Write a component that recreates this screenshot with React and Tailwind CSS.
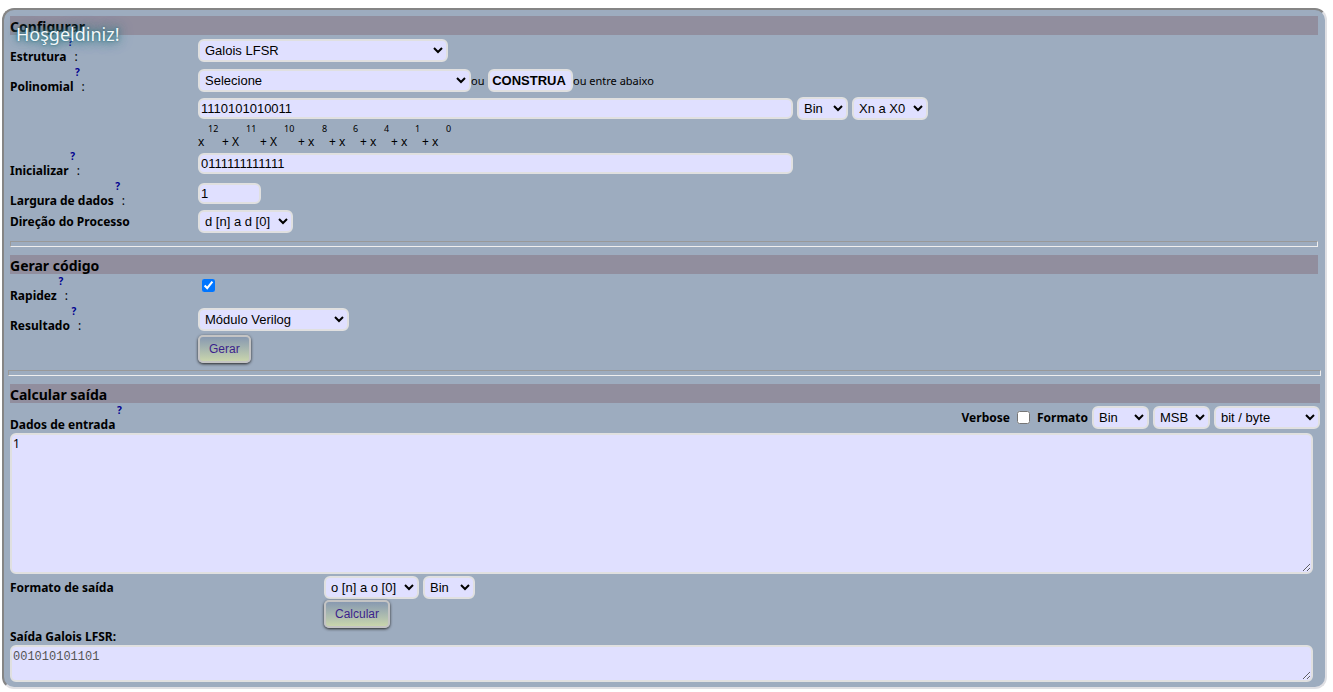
const field = "rounded-md border-2 border-[#e0e0e0] bg-[#e0e0ff]";
const sans = "font-['Liberation_Sans',Arial,sans-serif] text-[13px] font-normal text-black";

function Select({ label, id, value, className = "" }) {
  return (
    <select id={id} aria-label={label} className={`${field} ${sans} h-[23px] shrink-0 px-[1px] ${className}`}>
      <option>{value}</option>
    </select>
  );
}

function Band({ children }) {
  return <h2 className="h-[19px] bg-[#918e9e] text-[14px] leading-[21px] font-bold">{children}</h2>;
}

function Label({ htmlFor, children, colon = true }) {
  return (
    <div className="flex h-[30px] shrink-0">
      <label htmlFor={htmlFor} className="self-end text-[12px] leading-4 font-bold">{children}</label>
      <a href="#help" className="mt-[1px] h-3 w-2 text-center text-[10px] leading-3 font-bold text-[#000090]">?</a>
      {colon && <span className="self-end text-[12px] leading-4">:</span>}
    </div>
  );
}

function Row({ label, children }) {
  return (
    <div className="grid grid-cols-[188px_1fr]">
      <div>{label}</div>
      <div>{children}</div>
    </div>
  );
}

function Rule({ className = "" }) {
  return <hr className={`mt-[7px] mb-2 h-[6px] border border-t-[#999999] border-r-[#eeeeee] border-b-[#eeeeee] border-l-[#999999] ${className}`} />;
}

function ActionButton({ children }) {
  return (
    <button type="button" className="h-7 rounded-[5px] border-2 border-[#c4c4c4] bg-linear-to-b from-[#8899b0] to-[#c9d5ac] px-[9px] font-['Liberation_Sans',Arial,sans-serif] text-[12px] text-[#3c1f8c] shadow-[0_1px_3px_#222]">
      {children}
    </button>
  );
}

const terms = [
  ["x", 12], ["X", 11], ["X", 10], ["x", 8], ["x", 6], ["x", 4], ["x", 1], ["x", 0],
];

function Polynomial() {
  return (
    <div className="flex h-7 text-[12px]">
      {terms.map(([base, power], i) => (
        <span key={power} className="flex">
          <span className={`self-end leading-[14px] whitespace-pre ${i === 0 ? "w-[10px]" : "w-6"}`}>{i === 0 ? base : `+ ${base}`}</span>
          <sup className={`top-0 self-start text-[9px] leading-4 ${power > 9 ? "w-[14px]" : "w-[7px]"}`}>{power}</sup>
        </span>
      ))}
    </div>
  );
}

export default function App() {
  return (
    <div className="pt-2 pr-[6px] pb-[3px] pl-[2px] font-['Noto_Sans',Tahoma,sans-serif] text-[12px] text-black">
      <main className="relative rounded-xl border-2 border-t-[#858585] border-r-[#e0e0e4] border-b-[#e0e0e4] border-l-[#858585] bg-[#9dacbf] px-[6px] pt-[6px] pb-[5px]">
        <div className="absolute top-[10px] left-3 text-[18px] leading-7 text-[#f4f8fa] [text-shadow:0_0_2px_#2d6d7d,0_0_5px_#4b8793,0_0_8px_#4b8793,0_0_14px_#3d7d8d]">Hoşgeldiniz!</div>
        <section className="mr-[1px]">
          <Band>Configurar</Band>
          <Row label={<Label htmlFor="structure">Estrutura</Label>}>
            <div className="flex pt-1"><Select id="structure" value="Galois LFSR" className="w-[250px]" /></div>
          </Row>
          <Row label={<Label htmlFor="poly">Polinomial</Label>}>
            <div className="flex items-center pt-1">
              <Select id="poly" value="Selecione" className="w-[273px]" />
              <span className="w-[17px] pt-[2px] text-[11px]">ou</span>
              <button type="button" className={`${field} h-[23px] w-[85px] pr-[3px] text-center font-['Liberation_Sans',Arial,sans-serif] text-[13px] font-bold`}>CONSTRUA</button>
              <span className="pt-[2px] text-[11px]">ou entre abaixo</span>
            </div>
          </Row>
          <Row>
            <div className="flex h-[26px] items-center gap-1">
              <input aria-label="Polinomial" defaultValue="1110101010011" className={`${field} ${sans} h-[21px] w-[595px] px-[1px]`} />
              <Select label="Base" value="Bin" className="w-[51px]" />
              <Select label="Ordem" value="Xn a X0" className="w-[76px]" />
            </div>
            <Polynomial />
          </Row>
          <Row label={<Label htmlFor="init">Inicializar</Label>}>
            <div className="flex pt-1"><input id="init" defaultValue="0111111111111" className={`${field} ${sans} h-[21px] w-[595px] px-[1px]`} /></div>
          </Row>
          <Row label={<Label htmlFor="width">Largura de dados</Label>}>
            <div className="flex pt-1"><input id="width" defaultValue="1" className={`${field} ${sans} h-[21px] w-[63px] px-[1px]`} /></div>
          </Row>
          <div className="pt-[1px]">
            <Row label={<label htmlFor="direction" className="leading-6 font-bold">Direção do Processo</label>}>
              <div className="flex"><Select id="direction" value="d [n] a d [0]" className="w-[95px]" /></div>
            </Row>
          </div>
          <Rule />
        </section>
        <section>
          <div className="mr-[1px]">
            <Band>Gerar código</Band>
            <Row label={<Label htmlFor="fast">Rapidez</Label>}>
              <div className="flex pt-[5px] pl-1"><input id="fast" type="checkbox" defaultChecked className="size-[13px] accent-[#0075ff]" /></div>
            </Row>
            <Row label={<Label htmlFor="result">Resultado</Label>}>
              <div className="flex pt-1"><Select id="result" value="Módulo Verilog" className="w-[151px]" /></div>
            </Row>
            <Row><div className="flex pt-[1px]"><ActionButton>Gerar</ActionButton></div></Row>
          </div>
          <Rule className="-mx-[2px]" />
        </section>
        <section>
          <div className="-mr-[1px]">
            <Band>Calcular saída</Band>
            <div className="flex justify-between">
              <Label htmlFor="input-data" colon={false}>Dados de entrada</Label>
              <div className="flex h-[29px] items-center gap-1 font-bold">
                <label htmlFor="verbose">Verbose</label>
                <input id="verbose" type="checkbox" className="mx-[3px] size-[13px]" />
                <label htmlFor="format">Formato</label>
                <Select id="format" value="Bin" className="w-[57px]" />
                <Select label="Ordem dos bits" value="MSB" className="w-[57px]" />
                <Select label="Agrupamento" value="bit / byte" className="w-[106px]" />
              </div>
            </div>
          </div>
          <textarea id="input-data" defaultValue="1" className={`${field} block h-[141px] w-[calc(100%-6px)] px-[1px] py-[1px] font-['Noto_Sans',sans-serif] text-[12px] leading-4`} />
          <div className="grid grid-cols-[314px_1fr] pt-[2px]">
            <label htmlFor="output-order" className="leading-6 font-bold">Formato de saída</label>
            <div className="flex gap-1">
              <Select id="output-order" value="o [n] a o [0]" className="w-[95px]" />
              <Select label="Base de saída" value="Bin" className="w-[52px]" />
            </div>
            <div className="col-start-2"><ActionButton>Calcular</ActionButton></div>
          </div>
          <label htmlFor="output" className="block pt-[1px] leading-4 font-bold">Saída Galois LFSR:</label>
          <textarea id="output" readOnly defaultValue="001010101101" className={`${field} block h-[37px] w-[calc(100%-6px)] px-[1px] py-[1px] font-['Liberation_Mono',monospace] text-[12px] leading-[18px] text-[#545454]`} />
        </section>
      </main>
    </div>
  );
}
